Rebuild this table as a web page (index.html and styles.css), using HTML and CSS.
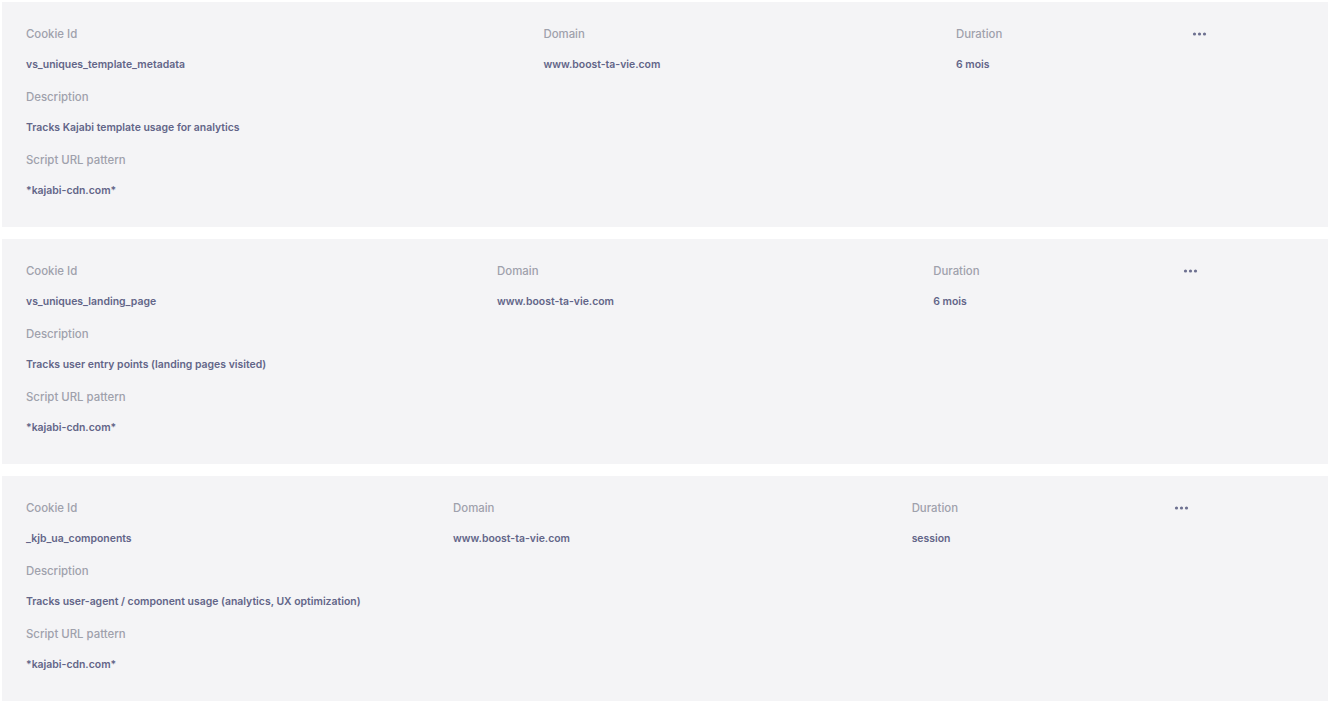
FILE: index.html
```html
<!DOCTYPE html>
<html>
<head>
    <title>Cookies</title>
    <link rel="stylesheet" href="styles.css">
</head>
<body>
    <div class="cookie-card">
        <table class="cookie-table">
            <tr>
                <td class="label">Cookie Id</td>
                <td class="label">Domain</td>
                <td class="label">Duration</td>
                <td class="label">
                    <svg class="dots" width="16" height="4" viewBox="0 0 16 4"><circle cx="2.5" cy="2" r="1.6"/><circle cx="7.5" cy="2" r="1.6"/><circle cx="12.5" cy="2" r="1.6"/></svg>
                </td>
            </tr>
            <tr>
                <td class="value">vs_uniques_template_metadata</td>
                <td class="value">www.boost-ta-vie.com</td>
                <td class="value">6 mois</td>
                <td class="value"></td>
            </tr>
            <tr><td class="label" colspan="4">Description</td></tr>
            <tr><td class="value" colspan="4">Tracks Kajabi template usage for analytics</td></tr>
            <tr><td class="label" colspan="4">Script URL pattern</td></tr>
            <tr><td class="value" colspan="4">*kajabi-cdn.com*</td></tr>
        </table>
    </div>

    <div class="cookie-card">
        <table class="cookie-table">
            <tr>
                <td class="label">Cookie Id</td>
                <td class="label">Domain</td>
                <td class="label">Duration</td>
                <td class="label">
                    <svg class="dots" width="16" height="4" viewBox="0 0 16 4"><circle cx="2.5" cy="2" r="1.6"/><circle cx="7.5" cy="2" r="1.6"/><circle cx="12.5" cy="2" r="1.6"/></svg>
                </td>
            </tr>
            <tr>
                <td class="value">vs_uniques_landing_page</td>
                <td class="value">www.boost-ta-vie.com</td>
                <td class="value">6 mois</td>
                <td class="value"></td>
            </tr>
            <tr><td class="label" colspan="4">Description</td></tr>
            <tr><td class="value" colspan="4">Tracks user entry points (landing pages visited)</td></tr>
            <tr><td class="label" colspan="4">Script URL pattern</td></tr>
            <tr><td class="value" colspan="4">*kajabi-cdn.com*</td></tr>
        </table>
    </div>

    <div class="cookie-card">
        <table class="cookie-table">
            <tr>
                <td class="label">Cookie Id</td>
                <td class="label">Domain</td>
                <td class="label">Duration</td>
                <td class="label">
                    <svg class="dots" width="16" height="4" viewBox="0 0 16 4"><circle cx="2.5" cy="2" r="1.6"/><circle cx="7.5" cy="2" r="1.6"/><circle cx="12.5" cy="2" r="1.6"/></svg>
                </td>
            </tr>
            <tr>
                <td class="value">_kjb_ua_components</td>
                <td class="value">www.boost-ta-vie.com</td>
                <td class="value">session</td>
                <td class="value"></td>
            </tr>
            <tr><td class="label" colspan="4">Description</td></tr>
            <tr><td class="value" colspan="4">Tracks user-agent / component usage (analytics, UX optimization)</td></tr>
            <tr><td class="label" colspan="4">Script URL pattern</td></tr>
            <tr><td class="value" colspan="4">*kajabi-cdn.com*</td></tr>
        </table>
    </div>
</body>
</html>
```

FILE: styles.css
```css
body {
    margin: 0;
    padding: 2px 5px 2px 2px;
    background-color: #ffffff;
    font-family: Inter, "Noto Sans", sans-serif;
}
.cookie-card {
    background-color: #f4f4f6;
    padding: 16px 0 20px;
    margin-bottom: 12px;
}
.cookie-table {
    width: 100%;
    border-collapse: collapse;
}
.cookie-table td {
    padding-left: 24px;
    padding-right: 24px;
    line-height: 16px;
    white-space: nowrap;
    vertical-align: top;
}
.label {
    padding-top: 8px;
    padding-bottom: 7px;
    height: 16px;
    font-size: 11.4px;
    color: #9fa1ac;
    font-weight: 500;
}
.value {
    padding-top: 8px;
    padding-bottom: 8px;
    height: 16px;
    font-size: 10.45px;
    color: #626588;
    font-weight: 600;
}
.dots {
    display: block;
    margin-top: 6px;
    fill: #6d7090;
}
```
